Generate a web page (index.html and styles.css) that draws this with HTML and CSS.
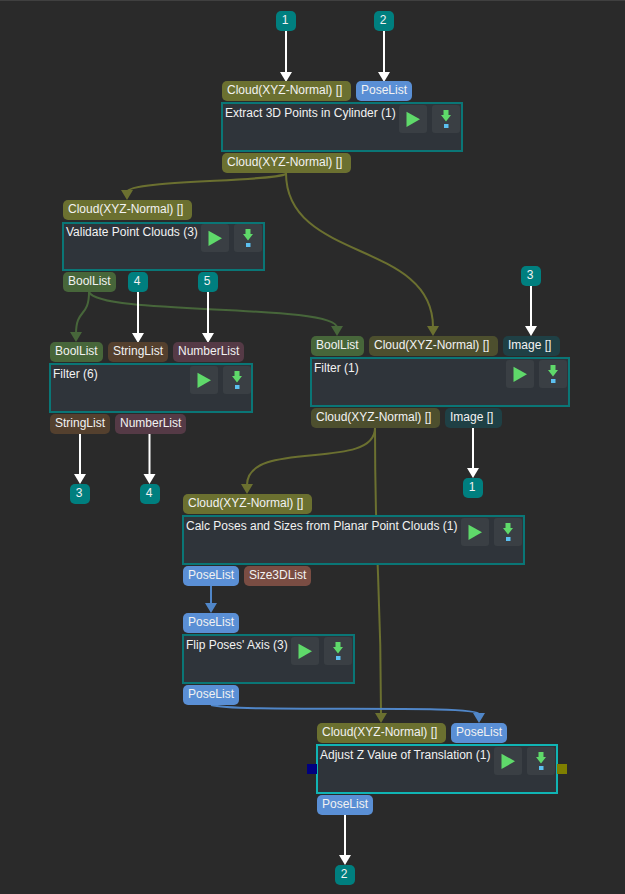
FILE: index.html
```html
<!DOCTYPE html>
<html lang="en">
<head>
    <meta charset="UTF-8">
    <meta name="viewport" content="width=device-width, initial-scale=1.0">
    <title>Step Graph</title>
    <link rel="stylesheet" href="styles.css">
</head>
<body>
    <svg width="0" height="0" class="defs">
        <symbol id="icon-run" viewBox="0 0 28 28">
            <polygon points="7.500,6.700 21,14.300 7.500,22" fill="#5fd96a"/>
        </symbol>
        <symbol id="icon-save" viewBox="0 0 28 28">
            <polygon points="11.500,5 16.500,5 16.500,10 19,10 14,16.500 9,10 11.500,10" fill="#5fd96a"/>
            <rect x="12" y="19" width="4.500" height="4" fill="#5cc0f0"/>
        </symbol>
    </svg>

    <div class="canvas">
        <!-- wires go under the nodes -->
        <svg class="wires" width="625" height="894">
            <g fill="none" stroke-width="2">
                <g stroke="#6b7030">
                    <path d="M286 174 C 270 182 127 180 127 192"/>
                    <path d="M286 173 C 286 262 433 240 433 327"/>
                    <path d="M375 428 C 375 472 247 438 247 485"/>
                    <path d="M375 428 C 375 575 381 575 381 714"/>
                </g>
                <g stroke="#47663a">
                    <path d="M89 292 C 89 318 76 308 76 334"/>
                    <path d="M89 292 C 100 316 337 303 337 328"/>
                </g>
                <g stroke="#5086c8">
                    <path d="M211 586 L 211 604"/>
                    <path d="M211 705 C 240 713 479 704 479 714"/>
                </g>
            </g>
            <g fill="#6b7030">
                <polygon points="121,190 133,190 127,200"/>
                <polygon points="427,326 439,326 433,336"/>
                <polygon points="241,484 253,484 247,494"/>
                <polygon points="375,713 387,713 381,723"/>
            </g>
            <g fill="#47663a">
                <polygon points="70,332 82,332 76,342"/>
                <polygon points="331,326 343,326 337,336"/>
            </g>
            <g fill="#5086c8">
                <polygon points="205,603 217,603 211,613"/>
                <polygon points="473,713 485,713 479,723"/>
            </g>
            <g stroke="#fff" stroke-width="2">
                <path d="M286 31 V 72"/>
                <path d="M384 31 V 72"/>
                <path d="M138 292 V 333"/>
                <path d="M208 292 V 333"/>
                <path d="M531 286 V 327"/>
                <path d="M80 434 V 475"/>
                <path d="M149.500 434 V 475"/>
                <path d="M473 428 V 469"/>
                <path d="M345 815 V 856"/>
            </g>
            <g fill="#fff">
                <polygon points="280,72 292,72 286,82"/>
                <polygon points="378,72 390,72 384,82"/>
                <polygon points="132,333 144,333 138,343"/>
                <polygon points="202,333 214,333 208,343"/>
                <polygon points="525,326 537,326 531,336"/>
                <polygon points="74,474 86,474 80,484"/>
                <polygon points="143.500,474 155.500,474 149.500,484"/>
                <polygon points="467,468 479,468 473,478"/>
                <polygon points="339,855 351,855 345,865"/>
            </g>
        </svg>

        <div class="terminal t-in1">1</div>
        <div class="terminal t-in2">2</div>
        <div class="terminal t-in3">3</div>
        <div class="terminal t-in4">4</div>
        <div class="terminal t-in5">5</div>
        <div class="terminal t-out1">1</div>
        <div class="terminal t-out2">2</div>
        <div class="terminal t-out3">3</div>
        <div class="terminal t-out4">4</div>

        <div class="step step-extract">
            <div class="ports">
                <span class="port cloud">Cloud(XYZ-Normal) []</span>
                <span class="port pose">PoseList</span>
            </div>
            <div class="box">
                <span class="title">Extract 3D Points in Cylinder (1)</span>
                <span class="btn"><svg width="28" height="28"><use href="#icon-run"/></svg></span>
                <span class="btn"><svg width="28" height="28"><use href="#icon-save"/></svg></span>
            </div>
            <div class="ports">
                <span class="port cloud">Cloud(XYZ-Normal) []</span>
            </div>
        </div>

        <div class="step step-validate">
            <div class="ports">
                <span class="port cloud">Cloud(XYZ-Normal) []</span>
            </div>
            <div class="box">
                <span class="title">Validate Point Clouds (3)</span>
                <span class="btn"><svg width="28" height="28"><use href="#icon-run"/></svg></span>
                <span class="btn"><svg width="28" height="28"><use href="#icon-save"/></svg></span>
            </div>
            <div class="ports">
                <span class="port bool">BoolList</span>
            </div>
        </div>

        <div class="step step-filter6">
            <div class="ports">
                <span class="port bool">BoolList</span>
                <span class="port string">StringList</span>
                <span class="port number">NumberList</span>
            </div>
            <div class="box">
                <span class="title">Filter (6)</span>
                <span class="btn"><svg width="28" height="28"><use href="#icon-run"/></svg></span>
                <span class="btn"><svg width="28" height="28"><use href="#icon-save"/></svg></span>
            </div>
            <div class="ports">
                <span class="port string">StringList</span>
                <span class="port number">NumberList</span>
            </div>
        </div>

        <div class="step step-filter1">
            <div class="ports">
                <span class="port bool">BoolList</span>
                <span class="port cloud dim">Cloud(XYZ-Normal) []</span>
                <span class="port image">Image []</span>
            </div>
            <div class="box">
                <span class="title">Filter (1)</span>
                <span class="btn"><svg width="28" height="28"><use href="#icon-run"/></svg></span>
                <span class="btn"><svg width="28" height="28"><use href="#icon-save"/></svg></span>
            </div>
            <div class="ports">
                <span class="port cloud dim">Cloud(XYZ-Normal) []</span>
                <span class="port image">Image []</span>
            </div>
        </div>

        <div class="step step-calc">
            <div class="ports">
                <span class="port cloud">Cloud(XYZ-Normal) []</span>
            </div>
            <div class="box">
                <span class="title">Calc Poses and Sizes from Planar Point Clouds (1)</span>
                <span class="btn"><svg width="28" height="28"><use href="#icon-run"/></svg></span>
                <span class="btn"><svg width="28" height="28"><use href="#icon-save"/></svg></span>
            </div>
            <div class="ports">
                <span class="port pose">PoseList</span>
                <span class="port size">Size3DList</span>
            </div>
        </div>

        <div class="step step-flip">
            <div class="ports">
                <span class="port pose">PoseList</span>
            </div>
            <div class="box">
                <span class="title">Flip Poses' Axis (3)</span>
                <span class="btn"><svg width="28" height="28"><use href="#icon-run"/></svg></span>
                <span class="btn"><svg width="28" height="28"><use href="#icon-save"/></svg></span>
            </div>
            <div class="ports">
                <span class="port pose">PoseList</span>
            </div>
        </div>

        <div class="step step-adjust">
            <div class="ports">
                <span class="port cloud">Cloud(XYZ-Normal) []</span>
                <span class="port pose">PoseList</span>
            </div>
            <div class="box selected">
                <span class="title">Adjust Z Value of Translation (1)</span>
                <span class="btn"><svg width="28" height="28"><use href="#icon-run"/></svg></span>
                <span class="btn"><svg width="28" height="28"><use href="#icon-save"/></svg></span>
                <span class="pin pin-left"></span>
                <span class="pin pin-right"></span>
            </div>
            <div class="ports">
                <span class="port pose">PoseList</span>
            </div>
        </div>
    </div>
</body>
</html>
```

FILE: styles.css
```css
body {
    margin: 0;
    background-color: #2a2a2a;
    font-family: "Liberation Sans", Arial, sans-serif;
    font-size: 12px;
    color: #f2f2f2;
}
.defs {
    position: absolute;
}
.canvas {
    position: relative;
    width: 625px;
    height: 894px;
    overflow: hidden;
    box-shadow: inset 0 1px 0 #404040;
}
.wires {
    position: absolute;
    left: 0;
    top: 0;
}

/* numbered terminals */
.terminal {
    position: absolute;
    box-sizing: border-box;
    width: 20px;
    height: 20px;
    padding-right: 2px;
    border-radius: 5px;
    background: #007f7f;
    line-height: 18px;
    text-align: center;
}
.t-in1 { left: 276px; top: 11px; }
.t-in2 { left: 374px; top: 11px; }
.t-in3 { left: 521px; top: 266px; }
.t-in4 { left: 128px; top: 272px; }
.t-in5 { left: 198px; top: 272px; }
.t-out1 { left: 463px; top: 478px; }
.t-out2 { left: 335px; top: 865px; }
.t-out3 { left: 70px; top: 484px; }
.t-out4 { left: 140px; top: 484px; }

/* steps */
.step {
    position: absolute;
    display: flex;
    flex-direction: column;
    gap: 1px;
}
.step-extract { left: 221px; top: 81px; width: 242px; }
.step-validate { left: 62px; top: 200px; width: 203px; }
.step-filter6 { left: 49px; top: 342px; width: 204px; }
.step-filter1 { left: 310px; top: 336px; width: 260px; }
.step-calc { left: 182px; top: 494px; width: 343px; }
.step-flip { left: 182px; top: 613px; width: 173px; }
.step-adjust { left: 316px; top: 723px; width: 242px; }

.ports {
    display: flex;
    gap: 5px;
    margin-left: 1px;
}
.port {
    box-sizing: border-box;
    height: 20px;
    padding-left: 5px;
    border-radius: 5px;
    line-height: 18px;
    white-space: nowrap;
}
.cloud { width: 129px; background: #6b7030; }
.cloud.dim { background: #4d4f2e; }
.pose { width: 56px; background: #5a8fd5; }
.bool { width: 53px; background: #47663a; }
.string { width: 60px; background: #54402e; }
.number { width: 71px; background: #553a46; }
.image { width: 57px; background: #1f4045; }
.size { width: 67px; background: #7a4d43; }

.box {
    position: relative;
    box-sizing: border-box;
    height: 50px;
    display: flex;
    align-items: flex-start;
    gap: 5px;
    padding: 1px 1px 0 2px;
    border: 2px solid #0a7676;
    background: #2f343a;
}
.box.selected {
    border-color: #10b4b4;
}
.step-validate .box {
    height: 49px;
    margin-top: 1px;
    padding-top: 0;
}
.step-filter6 .box {
    padding-right: 0;
}
.title {
    flex: 1;
    min-width: 0;
    padding-top: 1px;
    line-height: 14px;
    white-space: nowrap;
}
.btn {
    display: block;
    width: 28px;
    height: 28px;
    border-radius: 3px;
    background: #3a3f44;
}
.btn svg {
    display: block;
}

.pin {
    position: absolute;
    top: 18px;
    width: 10px;
    height: 10px;
}
.pin-left {
    left: -11px;
    background: #00007f;
}
.pin-right {
    right: -11px;
    background: #7f7f00;
}
```
